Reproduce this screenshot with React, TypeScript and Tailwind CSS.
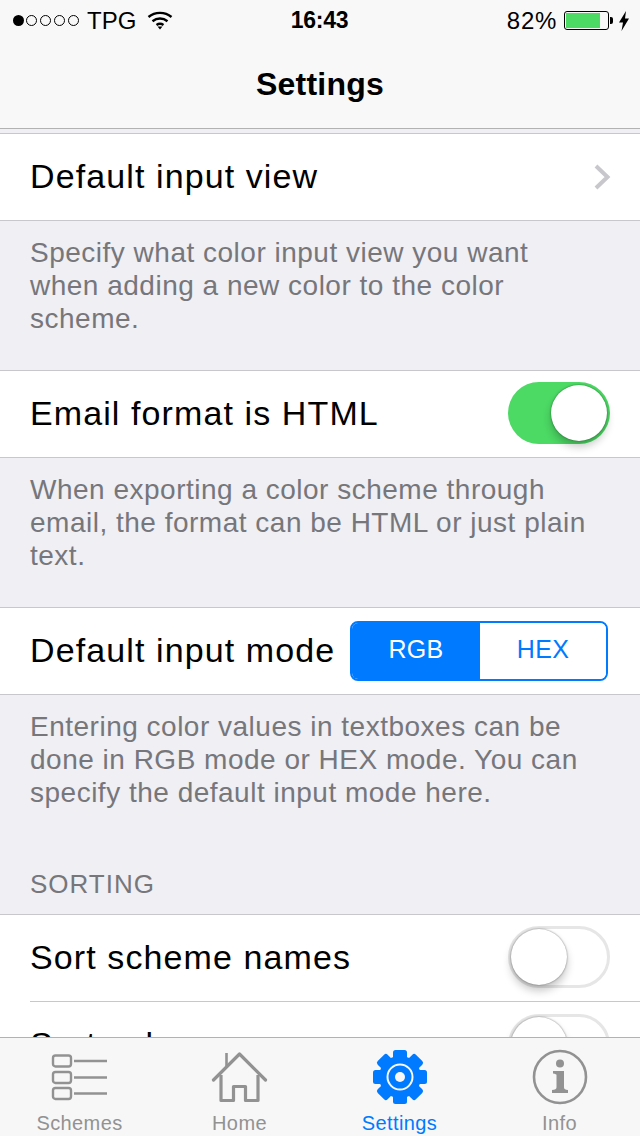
import React from "react";

const font = { fontFamily: '"Liberation Sans", Arial, sans-serif' };

function Toggle({ on = false }: { on?: boolean }) {
  return (
    <div className={`relative w-[102px] h-[62px] rounded-full shrink-0 mt-[-2px] ${on ? "bg-[#4cd964]" : "bg-white border-[3px] border-[#e6e6e6]"}`}>
      <div className={`absolute w-[56px] h-[56px] rounded-full bg-white shadow-[0_6px_8px_rgba(0,0,0,0.22),0_0_2px_rgba(0,0,0,0.5)] ${on ? "top-[3px] left-[43px]" : "top-[0px] left-[0px]"}`} />
    </div>
  );
}

function Footer({ lines, h }: { lines: string[]; h: string }) {
  return (
    <div className={`${h} pl-[30px] pt-[15px] text-[28px] leading-[33px] tracking-[0.5px] text-[#76767b]`}>
      {lines.map((l) => (
        <div key={l} className="whitespace-nowrap">{l}</div>
      ))}
    </div>
  );
}

function Row({ label, children }: { label: string; children?: React.ReactNode }) {
  return (
    <div className="h-[88px] bg-white border-y-[1px] border-[#c8c7cc] flex items-center justify-between pl-[30px] pr-[30px] text-[34px] text-black">
      <span className="whitespace-nowrap tracking-[1.1px] mt-[-2px]">{label}</span>
      {children}
    </div>
  );
}

function SchemesIcon() {
  return (
    <svg width="58" height="48" viewBox="0 0 58 48" fill="none" stroke="#929292" strokeWidth="2.4">
      <rect x="2" y="2.5" width="18" height="11" rx="2.5" />
      <rect x="2" y="19" width="18" height="11" rx="2.5" />
      <rect x="2" y="35" width="18" height="11" rx="2.5" />
      <path d="M23 8H56M23 24.500H56M23 40.500H56" />
    </svg>
  );
}

function HomeIcon() {
  return (
    <svg width="58" height="52" viewBox="0 0 58 52" fill="none" stroke="#929292" strokeWidth="3.200">
      <path d="M2.500 29L28.500 3L54.500 29" strokeLinecap="round" strokeLinejoin="round" />
      <path d="M15.500 2V15" strokeWidth="2.600" />
      <path d="M10 24V49.500H22.500V35.500H34.500V49.500H47V24" strokeLinejoin="round" />
    </svg>
  );
}

function GearIcon() {
  const teeth = [0, 45, 90, 135, 180, 225, 270, 315];
  return (
    <svg width="54" height="54" viewBox="0 0 54 54">
      <circle cx="27" cy="27" r="21" fill="#007aff" />
      {teeth.map((a) => (
        <rect key={a} x="20" y="0" width="14" height="14" rx="2.500" fill="#007aff" transform={`rotate(${a} 27 27)`} />
      ))}
      <circle cx="27" cy="27" r="12.500" fill="none" stroke="#f7f7f7" strokeWidth="2" />
      <circle cx="27" cy="27" r="5" fill="#f7f7f7" />
    </svg>
  );
}

function InfoIcon() {
  return (
    <svg width="56" height="56" viewBox="0 0 56 56">
      <circle cx="28" cy="28" r="26" fill="none" stroke="#929292" strokeWidth="2.6" />
      <circle cx="28" cy="14.500" r="4" fill="#929292" />
      <path d="M21 22H32V38.500Q32 40.500 36 41V44H20V41Q24.500 40.500 24.500 38.500V26Q24.500 25 21 24.500Z" fill="#929292" />
    </svg>
  );
}

function Tab({ label, active, children }: { label: string; active?: boolean; children: React.ReactNode }) {
  return (
    <div className="flex-1 flex flex-col items-center">
      <div className="h-[62px] flex items-center justify-center mt-[8px]">{children}</div>
      <div className={`text-[20px] leading-[24px] mt-[3px] mr-[1px] tracking-[0.4px] ${active ? "text-[#007aff]" : "text-[#929292]"}`}>{label}</div>
    </div>
  );
}

export default function App() {
  return (
    <div className="w-[640px] h-[1136px] flex flex-col overflow-hidden bg-[#efeff4]" style={font}>
      <div className="h-[129px] shrink-0 bg-[#f8f8f8] border-b-[1px] border-[#b2b2b2]">
        <div className="relative h-[41px] flex items-center justify-between pl-[13px] pr-[11px] text-[24px] text-black">
          <div className="flex items-center">
            <span className="w-[11px] h-[11px] rounded-full bg-black mr-[2px]" />
            {[0, 1, 2, 3].map((i) => (
              <span key={i} className="w-[11px] h-[11px] rounded-full border-[1px] border-black mr-[3px]" />
            ))}
            <span className="ml-[5px]">TPG</span>
            <svg className="ml-[11px] mt-[-1px]" width="26" height="20" viewBox="0 0 26 20" fill="none" stroke="#000" strokeWidth="2.4">
              <path d="M1.500 7C8 1.500 18 1.500 24.500 7" />
              <path d="M5.500 11.200C10 7.600 16 7.600 20.500 11.200" />
              <path d="M9.500 15C11.500 13.600 14.500 13.600 16.500 15" />
              <path d="M10.500 16.500L13 19.500L15.500 16.500Z" fill="#000" stroke="none" />
            </svg>
          </div>
          <span className="absolute left-0 right-0 text-center font-bold text-[23px] tracking-[-0.3px] pr-[1px]">16:43</span>
          <div className="flex items-center">
            <span className="tracking-[0.7px]">82%</span>
            <div className="ml-[7px] w-[45px] h-[19px] border-[1px] border-black rounded-[3px] p-[1px]">
              <div className="w-[34px] h-full bg-[#4cd964]" />
            </div>
            <div className="w-[3px] h-[7px] bg-black rounded-r-[2px] ml-[1px]" />
            <svg className="ml-[6px]" width="10" height="20" viewBox="0 0 10 20">
              <path d="M7 0L0 11.500H4L2.500 20L10 7.500H6Z" fill="#000" />
            </svg>
          </div>
        </div>
        <div className="h-[87px] flex items-center justify-center text-[32px] font-bold tracking-[0.2px] text-black pb-[1px]">Settings</div>
      </div>

      <div className="flex-1 overflow-hidden pt-[4px]">
        <Row label="Default input view">
          <svg width="18" height="26" viewBox="0 0 18 26" fill="none" stroke="#c7c7cc" strokeWidth="4" className="mr-[-1px]">
            <path d="M3 2L14.500 13L3 24" />
          </svg>
        </Row>
        <Footer h="h-[149px]" lines={["Specify what color input view you want", "when adding a new color to the color", "scheme."]} />
        <Row label="Email format is HTML">
          <Toggle on />
        </Row>
        <Footer h="h-[149px]" lines={["When exporting a color scheme through", "email, the format can be HTML or just plain", "text."]} />
        <Row label="Default input mode">
          <div className="w-[258px] h-[60px] mr-[2px] rounded-[8px] border-[2px] border-[#007aff] flex text-[25px] tracking-[0.3px] overflow-hidden shrink-0">
            <div className="w-[128px] bg-[#007aff] text-white flex items-center justify-center pb-[2px]">RGB</div>
            <div className="flex-1 bg-white text-[#007aff] flex items-center justify-center pb-[2px]">HEX</div>
          </div>
        </Row>
        <div className="h-[219px] pl-[30px] pt-[15px] text-[28px] leading-[33px] tracking-[0.5px] text-[#76767b]">
          <div className="whitespace-nowrap">Entering color values in textboxes can be</div>
          <div className="whitespace-nowrap">done in RGB mode or HEX mode. You can</div>
          <div className="whitespace-nowrap">specify the default input mode here.</div>
          <div className="mt-[59px] text-[26px] tracking-[1px] leading-[33px] whitespace-nowrap">SORTING</div>
        </div>
        <div className="bg-white border-t-[1px] border-[#c8c7cc]">
          <div className="pl-[30px]">
            <div className="h-[87px] border-b-[1px] border-[#c8c7cc] flex items-center justify-between pr-[30px] text-[34px] text-black">
              <span className="whitespace-nowrap tracking-[1.1px] mt-[-2px]">Sort scheme names</span>
              <Toggle />
            </div>
            <div className="h-[87px] flex items-center justify-between pr-[30px] text-[34px] text-black">
              <span className="whitespace-nowrap tracking-[1.1px] mt-[-2px]">Sort colors</span>
              <Toggle />
            </div>
          </div>
        </div>
      </div>

      <div className="h-[99px] shrink-0 bg-[#f7f7f7] border-t-[1px] border-[#b2b2b2] flex px-[0px]">
        <Tab label="Schemes"><SchemesIcon /></Tab>
        <Tab label="Home"><HomeIcon /></Tab>
        <Tab label="Settings" active><GearIcon /></Tab>
        <Tab label="Info"><InfoIcon /></Tab>
      </div>
    </div>
  );
}
